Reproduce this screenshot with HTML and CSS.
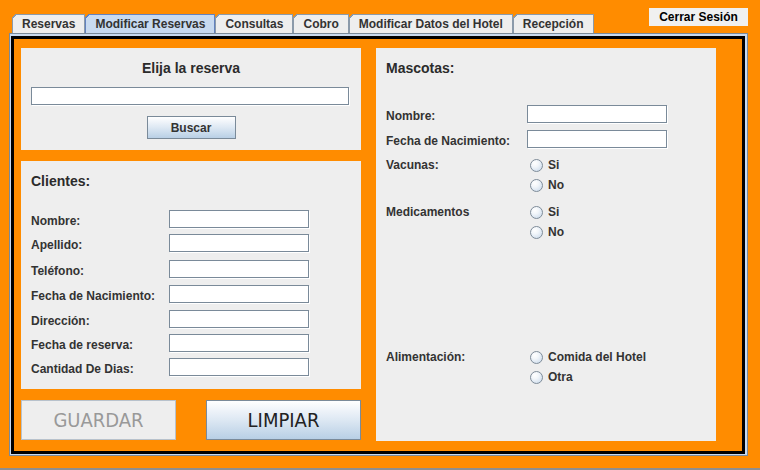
FILE: index.html
```html
<!DOCTYPE html>
<html lang="es">
<head>
<meta charset="utf-8">
<title>Modificar Reservas</title>
<link rel="stylesheet" href="styles.css">
</head>
<body>
<div class="window">
  <div class="topbar">
    <div class="tabs">
      <div class="tab">Reservas</div>
      <div class="tab selected">Modificar Reservas</div>
      <div class="tab">Consultas</div>
      <div class="tab">Cobro</div>
      <div class="tab">Modificar Datos del Hotel</div>
      <div class="tab">Recepción</div>
    </div>
    <button class="logout">Cerrar Sesión</button>
  </div>
  <div class="tabbody">
    <div class="frame">
      <div class="col-left">
        <section class="panel search">
          <div class="title">Elija la reserva</div>
          <input class="field wide" type="text">
          <button class="btn buscar">Buscar</button>
        </section>
        <section class="panel clients">
          <div class="title">Clientes:</div>
          <div class="form">
            <label>Nombre:</label><input class="field" type="text">
            <label>Apellido:</label><input class="field" type="text">
            <label>Teléfono:</label><input class="field" type="text">
            <label>Fecha de Nacimiento:</label><input class="field" type="text">
            <label>Dirección:</label><input class="field" type="text">
            <label>Fecha de reserva:</label><input class="field" type="text">
            <label>Cantidad De Dias:</label><input class="field" type="text">
          </div>
        </section>
        <div class="actions">
          <button class="big disabled">GUARDAR</button>
          <button class="big btn">LIMPIAR</button>
        </div>
      </div>
      <section class="panel pets">
        <div class="title">Mascotas:</div>
        <div class="prow first"><label>Nombre:</label><input class="field" type="text"></div>
        <div class="prow"><label>Fecha de Nacimiento:</label><input class="field" type="text"></div>
        <div class="rgroup vac">
          <label>Vacunas:</label>
          <div class="opts">
            <div class="opt"><span class="radio"></span>Si</div>
            <div class="opt"><span class="radio"></span>No</div>
          </div>
        </div>
        <div class="rgroup med">
          <label>Medicamentos</label>
          <div class="opts">
            <div class="opt"><span class="radio"></span>Si</div>
            <div class="opt"><span class="radio"></span>No</div>
          </div>
        </div>
        <div class="rgroup food">
          <label>Alimentación:</label>
          <div class="opts">
            <div class="opt"><span class="radio"></span>Comida del Hotel</div>
            <div class="opt"><span class="radio"></span>Otra</div>
          </div>
        </div>
      </section>
    </div>
  </div>
  <div class="statusline"></div>
</div>
</body>
</html>
```

FILE: styles.css
```css
html, body {
  margin: 0;
  padding: 0;
}

body {
  width: 760px;
  height: 470px;
  overflow: hidden;
  background: #ff8c00;
  font-family: "Liberation Sans", Arial, sans-serif;
  color: #333333;
}

.window {
  display: flex;
  flex-direction: column;
  height: 470px;
}

/* ---------- top bar / tabs ---------- */
.topbar {
  display: flex;
  height: 33px;
  padding-left: 12px;
  padding-right: 12px;
  box-sizing: border-box;
}

.tabs {
  display: flex;
  align-items: flex-end;
  margin-top: 14px;
  height: 19px;
}

.tab {
  position: relative;
  box-sizing: border-box;
  height: 19px;
  padding: 0 9px;
  border: 1px solid #8b9aaa;
  border-bottom: none;
  background: #eeeeee;
  font-weight: bold;
  font-size: 12px;
  line-height: 18px;
  color: #333333;
  white-space: nowrap;
}

.tab::before {
  content: "";
  position: absolute;
  top: -1px;
  left: -1px;
  width: 6px;
  height: 6px;
  background: linear-gradient(135deg, #ff8c00 0, #ff8c00 2.6px, #8b9aaa 2.6px, #8b9aaa 3.8px, transparent 3.8px);
}

.tab.selected {
  background: #c8daf0;
  border-color: #6382bf;
  color: #333333;
}

.tab.selected::before {
  background: linear-gradient(135deg, #ff8c00 0, #ff8c00 2.6px, #6382bf 2.6px, #6382bf 3.8px, transparent 3.8px);
}

.logout {
  margin-left: auto;
  margin-top: 8px;
  width: 99px;
  height: 18px;
  padding: 0;
  border: none;
  background: #f0f0f0;
  font-family: "Liberation Sans", Arial, sans-serif;
  font-weight: bold;
  font-size: 12px;
  color: #000000;
}

/* ---------- tab body ---------- */
.tabbody {
  margin-left: 9px;
  width: 739px;
  height: 423px;
  box-sizing: border-box;
  border: 1px solid #7a8a99;
  background: #c8daf0;
  padding: 2px 2px 1px 1px;
}

.frame {
  box-sizing: border-box;
  height: 100%;
  border: 3px solid #000000;
  background: #ff8c00;
  display: flex;
  gap: 15px;
  padding: 9px 0 0 7px;
}

.col-left {
  width: 340px;
  display: flex;
  flex-direction: column;
  gap: 11px;
}

.panel {
  background: #eeeeee;
  box-sizing: border-box;
}

.title {
  font-weight: bold;
  font-size: 14px;
  line-height: 17px;
  color: #2b2b2b;
}

.field {
  box-sizing: border-box;
  height: 18px;
  margin: 0 1px 1px 0;
  padding: 0 3px;
  border: 1px solid #7a8a99;
  background: #ffffff;
  box-shadow: 1px 1px 0 #ffffff;
  outline: none;
  font-family: "Liberation Sans", Arial, sans-serif;
  font-size: 12px;
}

.btn {
  border: 1px solid #7a8a99;
  background: linear-gradient(to bottom, #ffffff 0%, #eef3f9 25%, #dde8f3 50%, #b8cfe5 100%);
  font-family: "Liberation Sans", Arial, sans-serif;
  color: #333333;
  padding: 0;
}

/* search panel */
.search {
  height: 102px;
  padding-top: 12px;
  display: flex;
  flex-direction: column;
  align-items: center;
}

.field.wide {
  align-self: flex-start;
  margin-left: 10px;
  margin-top: 10px;
  width: 318px;
}

.buscar {
  margin-top: 10px;
  width: 89px;
  height: 23px;
  font-weight: bold;
  font-size: 12px;
}

/* clients panel */
.clients {
  height: 228px;
  padding: 12px 0 0 10px;
}

.form {
  margin-top: 20px;
  display: grid;
  grid-template-columns: 138px 141px;
  grid-template-rows: 24px 26px 25px 25px 24px 24px 19px;
  align-items: start;
}

.form label,
.prow label,
.rgroup label {
  font-weight: bold;
  font-size: 12px;
  line-height: 19px;
  padding-top: 2px;
  color: #333333;
  white-space: nowrap;
}

.form .field {
  width: 140px;
}

/* action buttons */
.actions {
  display: flex;
  justify-content: space-between;
  height: 40px;
}

.big {
  width: 155px;
  height: 40px;
  font-family: "DejaVu Sans Condensed", "DejaVu Sans", sans-serif;
  font-stretch: condensed;
  font-size: 20px;
  padding: 0;
}

.big.disabled {
  background: #eeeeee;
  border: 1px solid #b8c2cc;
  color: #999999;
}

.big.btn {
  font-family: "DejaVu Sans Condensed", "DejaVu Sans", sans-serif;
  color: #222222;
}

/* pets panel */
.pets {
  width: 340px;
  height: 393px;
  padding: 12px 0 0 10px;
}

.prow {
  display: grid;
  grid-template-columns: 141px 141px;
  height: 19px;
  margin-top: 6px;
}

.prow.first {
  margin-top: 28px;
}

.prow .field {
  width: 140px;
}

.rgroup {
  display: grid;
  grid-template-columns: 141px 1fr;
}

.rgroup label {
  line-height: 20px;
  padding-top: 0;
}

.rgroup.vac { margin-top: 6px; }
.rgroup.med { margin-top: 7px; }
.rgroup.food { margin-top: 105px; }

.opt {
  display: flex;
  align-items: center;
  height: 20px;
  font-weight: bold;
  font-size: 12px;
  color: #333333;
}

.radio {
  box-sizing: border-box;
  width: 13px;
  height: 13px;
  margin-left: 3px;
  margin-right: 5px;
  border-radius: 50%;
  border: 1px solid #7f8c99;
  background: radial-gradient(circle at 35% 30%, #ffffff 0%, #f2f6fa 35%, #c4d6e9 100%);
}

.statusline {
  margin-top: auto;
  height: 2px;
  background: #8e8e8e;
}
```
